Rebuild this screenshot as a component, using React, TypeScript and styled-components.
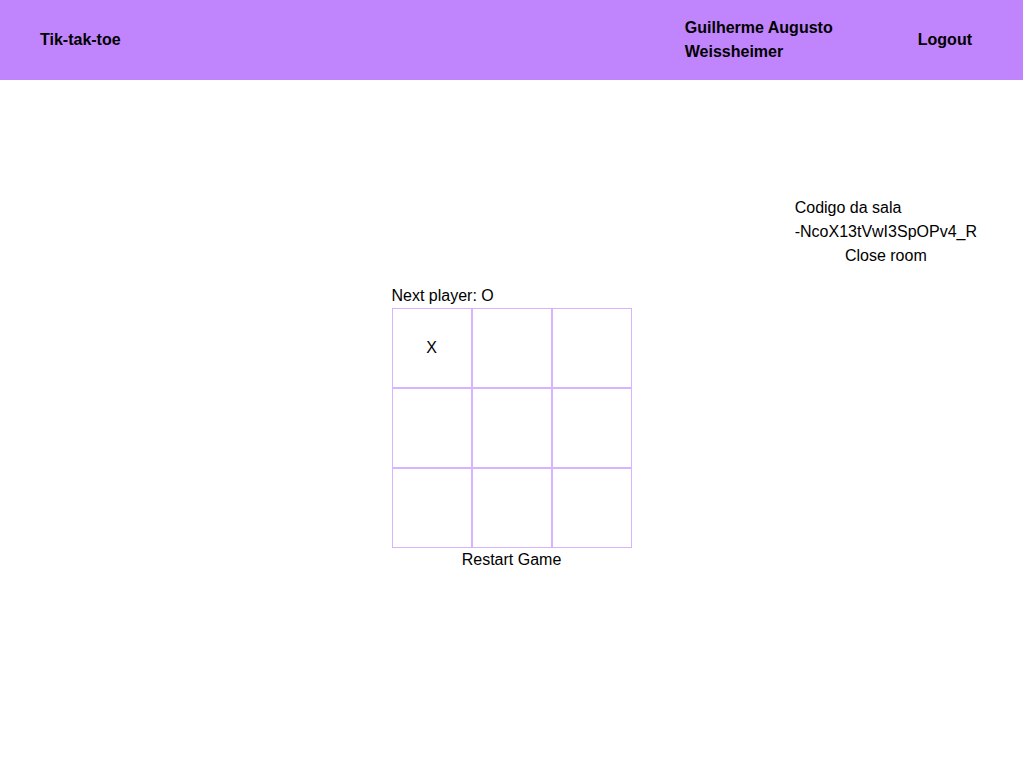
import React, { useState } from "react";
import styled, { createGlobalStyle } from "styled-components";

const Global = createGlobalStyle`
  html, body { margin: 0; padding: 0; background: #ffffff; }
  body {
    font-family: "Liberation Sans", "Noto Sans", Arial, sans-serif;
    font-size: 16px;
    line-height: 24px;
    color: #000;
  }
  * { box-sizing: border-box; }
`;

const Header = styled.header`
  height: 80px;
  background: #c084fc;
  display: flex;
  align-items: center;
  justify-content: space-between;
  padding: 0 51px 0 40px;
  font-weight: 700;
  font-size: 16px;
`;

const Brand = styled.div``;

const RightGroup = styled.div`
  display: flex;
  align-items: center;
`;

const UserName = styled.div`
  width: 155px;
  margin-right: 78px;
`;

const HeaderButton = styled.button`
  background: none;
  border: none;
  padding: 0;
  font: inherit;
  color: inherit;
  cursor: pointer;
`;

const Main = styled.main`
  padding-top: 116px;
  display: flex;
  flex-direction: column;
`;

const RoomRow = styled.div`
  display: flex;
  justify-content: flex-end;
  padding-right: 46px;
`;

const RoomInfo = styled.div`
  display: flex;
  flex-direction: column;
`;

const TextButton = styled.button`
  background: none;
  border: none;
  padding: 0;
  font: inherit;
  line-height: 24px;
  color: inherit;
  cursor: pointer;
  text-align: center;
`;

const GameColumn = styled.div`
  margin: 16px auto 0;
  width: 240px;
  display: flex;
  flex-direction: column;
`;

const Status = styled.div``;

const Board = styled.div`
  display: grid;
  grid-template-columns: repeat(3, 80px);
  grid-template-rows: repeat(3, 80px);
`;

const Square = styled.button`
  width: 80px;
  height: 80px;
  border: 1px solid #d8b4fe;
  background: #ffffff;
  padding: 0;
  font: inherit;
  font-size: 16px;
  color: #000;
  cursor: pointer;
  display: flex;
  align-items: center;
  justify-content: center;
`;

export default function App() {
  const [squares, setSquares] = useState<(string | null)[]>([
    "X", null, null, null, null, null, null, null, null,
  ]);
  const [xNext, setXNext] = useState(false);

  const play = (i: number) => {
    if (squares[i]) return;
    const next = squares.slice();
    next[i] = xNext ? "X" : "O";
    setSquares(next);
    setXNext(!xNext);
  };

  return (
    <>
      <Global />
      <Header>
        <Brand>Tik-tak-toe</Brand>
        <RightGroup>
          <UserName>Guilherme Augusto Weissheimer</UserName>
          <HeaderButton>Logout</HeaderButton>
        </RightGroup>
      </Header>
      <Main>
        <RoomRow>
          <RoomInfo>
            <span>Codigo da sala</span>
            <span>-NcoX13tVwI3SpOPv4_R</span>
            <TextButton>Close room</TextButton>
          </RoomInfo>
        </RoomRow>
        <GameColumn>
          <Status>Next player: {xNext ? "X" : "O"}</Status>
          <Board>
            {squares.map((v, i) => (
              <Square key={i} onClick={() => play(i)}>
                {v}
              </Square>
            ))}
          </Board>
          <TextButton
            onClick={() => {
              setSquares(Array(9).fill(null));
              setXNext(true);
            }}
          >
            Restart Game
          </TextButton>
        </GameColumn>
      </Main>
    </>
  );
}
